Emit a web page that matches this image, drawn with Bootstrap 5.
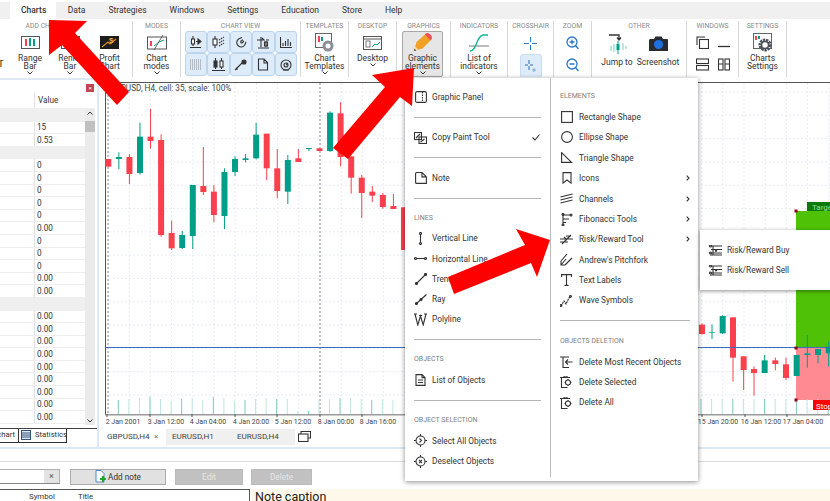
<!DOCTYPE html>
<html lang="en">
<head>
<meta charset="UTF-8" />
<title>Charts - Graphic elements</title>
<link href="https://cdn.jsdelivr.net/npm/bootstrap@5.3.3/dist/css/bootstrap.min.css" rel="stylesheet" />
<style>
  html, body { height: 100%; }
  body { width: 830px; height: 501px; overflow: hidden; background: #fff; color: #333; font-family: Roboto, "Liberation Sans", sans-serif; font-size: 8px; line-height: 1; }
  svg { display: block; flex: none; }
  .ic { fill: none; stroke: #333; stroke-width: 1.1; }

  .app { position: relative; width: 830px; height: 501px; padding-top: 2px; }

  /* top tabs */
  .top-tabs { height: 17px; background: #f0f0f0; flex-wrap: nowrap; }
  .top-tabs .nav-link { height: 17px; padding: 4px 11.5px 0; color: #333; font-size: 8.5px; border-radius: 0; }
  .top-tabs .nav-link.active { background: #fff; font-weight: 500; padding: 4px 10px 0 11px; }

  /* ribbon */
  .ribbon { height: 59px; flex: none; overflow: hidden; }
  .rgroup { height: 56px; margin-top: 2px; border-right: 1px solid #d8d8d8; flex: none; overflow: hidden; }
  .rtitle { height: 11px; padding-top: 2px; font-size: 6.8px; color: #8a8a8a; text-align: center; white-space: nowrap; }
  .ritem { display: flex; flex-direction: column; align-items: center; flex: none; text-align: center; font-size: 8.5px; line-height: 8.2px; color: #333; }
  .ricon { height: 21px; display: flex; align-items: center; justify-content: center; margin-bottom: 1px; }
  .chev { width: 6px; height: 4px; margin-top: 1px; }
  .viewgrid { display: grid; grid-template-columns: repeat(5, 22.4px); grid-auto-rows: 22.4px; margin: -1px 0 0 4px; }
  .vbtn { background: #deebf8; border: 1px solid #bcd4ec; border-radius: 3px; display: flex; align-items: center; justify-content: center; }
  .gfx-active { background: #e6e6e6; border: 1px solid #a8a8a8; border-radius: 2px; margin: -1px 0 0 5px; width: 41px; height: 46px; }
  .cross-active { background: #deebf8; border: 1px solid #c9ddf1; border-radius: 3px; width: 22px; height: 24px; display: flex; align-items: center; justify-content: center; }

  /* main */
  .mainrow { height: 369px; flex: none; }
  .sidepanel { width: 99px; flex: none; border-right: 2px solid #dce8f4; border-top: 2px solid #dfe9f3; padding-top: 2px; position: relative; }
  .close-x { width: 8px; height: 8px; background: #c4434f; color: #fff; font-size: 6px; line-height: 8px; text-align: center; margin: 2px 3px 0 auto; }
  .grid-head { height: 16px; margin-top: 1px; width: 95px; border-bottom: 1px solid #eee; }
  .cell-a { width: 35px; border-right: 1px solid #e2e2e2; height: 100%; flex: none; }
  .cell-b { padding-left: 2px; font-size: 8.2px; color: #333; }
  .grid-body { width: 85px; }
  .prow { height: 12.6px; border-bottom: 1px solid #eee; }
  .prow.grp { background: #efefef; border-bottom: 0; }
  .vscroll { position: absolute; left: 85px; top: 29px; width: 10px; height: 316px; background: #ebebeb; }
  .vscroll i { display: block; position: absolute; left: 0; top: 12px; width: 10px; height: 11px; background: #c0c0c0; }
  .vscroll b { display: block; position: absolute; left: 2px; font-weight: 400; }
  .ptabs { height: 14px; margin-top: 4px; border-top: 1px solid #444; }
  .ptab { height: 14px; padding: 0 3px 0 0; font-size: 7.7px; border-right: 1px solid #333; border-bottom: 1px solid #333; background: #fff; }
  .charttabs { height: 17px; background: #fff; padding-left: 8px; font-size: 8.1px; color: #444; }
  .ctab-off { background: #f0f0f0; height: 16px; width: 129px; padding-left: 6px; }

  /* bottom */
  .bottom { height: 54px; flex: none; border-top: 2px solid #dce8f4; position: relative; }
  .hline { height: 1px; background: #ddd; margin-top: 12px; }
  .tool-row { height: 16px; margin-top: 7px; }
  .srch { width: 60px; height: 15px; border: 1px solid #b0b0b0; border-left: 0; border-bottom-color: #888; display: flex; justify-content: flex-end; }
  .srch span { width: 15px; background: #e3e3e3; text-align: center; font-size: 9px; line-height: 13px; color: #555; }
  .flat-btn { height: 15.5px; padding: 0; border-radius: 0; font-size: 8.2px; line-height: 1; display: flex; align-items: center; justify-content: center; gap: 2px; }
  .btn-add { width: 96px; margin-left: 10px; background: #e1e1e1; border: 1px solid #ababab; color: #333; }
  .btn-off { background: #c1c1c1; border: 1px solid #bbb; color: #e6e6e6; }
  .notes-row { margin-top: 4px; height: 14px; }
  .notes-head { width: 250px; border-top: 1px solid #555; border-right: 1px solid #555; height: 14px; font-size: 7.8px; padding-top: 3px; flex: none; }
  .caption { flex: 1; margin-left: 2px; background: #fdf8e9; font-size: 12.5px; color: #222; padding: 2px 0 0 3px; white-space: nowrap; }

  /* graphic elements menu */
  .gmenu.dropdown-menu { display: flex; position: absolute; left: 405px; top: 78px; width: 293px; height: 403px; padding: 0; margin: 0; border: 0; border-radius: 0; box-shadow: 0 1px 5px rgba(0,0,0,.45); z-index: 5; font-size: 8px; }
  .mcol { width: 146px; flex: none; }
  .mcol-l { padding: 9px 9px 0; --rh: 20.22px; border-right: 1px solid #bdbdbd; height: 399px; }
  .mcol-r { padding: 8.5px 8px 0 9px; --rh: 20.4px; flex: 1; }
  .mrow { height: var(--rh); padding: 0; display: flex; align-items: center; gap: 5px; color: #333; background: none; white-space: nowrap; font-size: 8.3px; }
  .mcol-r .mrow { gap: 6px; }
  .mrow .ic-slot { width: 13px; display: flex; justify-content: center; flex: none; }
  .mrow .sub { margin-left: auto; }
  .mhead { height: var(--rh); padding: 0; display: flex; align-items: center; font-size: 7px; color: #808080; }
  .mdiv { height: var(--rh); display: flex; align-items: center; }
  .mdiv hr { width: 100%; margin: 0; border: 0; border-top: 1px solid #b5b5b5; opacity: 1; }
  .submenu.dropdown-menu { display: block; position: absolute; left: 700px; top: 230px; width: 118px; height: 60px; padding: 10px 0 0 9px; margin: 0; border: 0; border-radius: 0; box-shadow: 0 1px 4px rgba(0,0,0,.45); z-index: 6; --rh: 20.4px; }
  .overlay { position: absolute; left: 0; top: 0; z-index: 10; pointer-events: none; }
</style>
</head>
<body>
<div class="app d-flex flex-column">

  <!-- tabs -->
  <ul class="nav top-tabs">
    <li class="nav-item" style="margin-left:10px"><a class="nav-link active" href="#">Charts</a></li>
    <li class="nav-item"><a class="nav-link" href="#">Data</a></li>
    <li class="nav-item"><a class="nav-link" href="#">Strategies</a></li>
    <li class="nav-item"><a class="nav-link" href="#">Windows</a></li>
    <li class="nav-item"><a class="nav-link" href="#">Settings</a></li>
    <li class="nav-item"><a class="nav-link" href="#">Education</a></li>
    <li class="nav-item"><a class="nav-link" href="#">Store</a></li>
    <li class="nav-item"><a class="nav-link" href="#">Help</a></li>
  </ul>

  <!-- ribbon -->
  <div class="ribbon d-flex">
    <div class="rgroup" style="width:133px">
      <div class="rtitle" style="padding-right:44px">ADD CHART</div>
      <div class="d-flex">
        <div class="ritem" style="width:10px;padding-top:28px"><b style="margin-left:-8px;color:#7a5a20">T</b></div>
        <div class="ritem" style="width:40px">
          <div class="ricon"><svg width="19" height="13" viewBox="0 0 19 13"><rect x=".5" y=".5" width="18" height="12" fill="#fff" stroke="#555"/><path d="M5 3v7" stroke="#f9404c" stroke-width="2"/><path d="M9 2v8M13 3v7" stroke="#009e88" stroke-width="2"/></svg></div>
          Range<br>Bar
          <svg class="chev" viewBox="0 0 6 4"><path d="M.5.5 3 3 5.500.5" fill="none" stroke="#333"/></svg>
        </div>
        <div class="ritem" style="width:40px">
          <div class="ricon"><svg width="19" height="13" viewBox="0 0 19 13"><rect x=".5" y=".5" width="18" height="12" fill="#fff" stroke="#555"/><path d="M6 3v7" stroke="#333" stroke-width="2"/></svg></div>
          Renko<br>Bar
          <svg class="chev" viewBox="0 0 6 4"><path d="M.5.5 3 3 5.500.5" fill="none" stroke="#333"/></svg>
        </div>
        <div class="ritem" style="width:39px">
          <div class="ricon"><svg width="19" height="13" viewBox="0 0 19 13"><rect width="19" height="13" fill="#1d1d1d"/><path d="M2 11 8 6l2 2 6-5" fill="none" stroke="#e08a1e" stroke-width="1.200"/><text x="9" y="7" font-size="8" font-weight="700" fill="#f3a83a" font-family="Liberation Sans">$</text></svg></div>
          Profit<br>Chart
        </div>
      </div>
    </div>

    <div class="rgroup" style="width:48px">
      <div class="rtitle">MODES</div>
      <div class="ritem">
        <div class="ricon"><svg width="20" height="17" viewBox="0 0 20 17"><rect x=".5" y="3" width="19" height="12" fill="#fff" stroke="#555"/><path d="M4 7v5" stroke="#f9404c" stroke-width="2"/><path d="M7 12l5-4 5-2" fill="none" stroke="#0aa06e"/><path d="M7 16 16 1" stroke="#444" stroke-width=".8"/></svg></div>
        Chart<br>modes
        <svg class="chev" viewBox="0 0 6 4"><path d="M.5.5 3 3 5.500.5" fill="none" stroke="#333"/></svg>
      </div>
    </div>

    <div class="rgroup" style="width:120px">
      <div class="rtitle">CHART VIEW</div>
      <div class="viewgrid">
        <div class="vbtn"><svg class="ic" width="12" height="12" viewBox="0 0 12 12"><path d="M3 0v10M0 11.500h11"/><rect x="1.500" y="3" width="3" height="5" fill="#fff"/><path d="M6 5.500h2M8 3l3 2.500L8 8z" fill="#333"/></svg></div>
        <div class="vbtn"><svg class="ic" width="13" height="12" viewBox="0 0 13 12"><path d="M3 0v12"/><rect x="1" y="3" width="4" height="6" fill="#fff"/><path d="M7 4l5-3M7 7l5-3M7 10l5-3" stroke-dasharray="1.500 .8"/></svg></div>
        <div class="vbtn"><svg class="ic" width="12" height="12" viewBox="0 0 12 12" stroke-width="1.800"><path d="M7 1.500 3.500 3C.8 5.200 1.500 8.500 3.500 10s5 1.500 6.500-1.500L11 6"/><path d="M8 3.800 6 5C5 6.200 6.500 7.500 7.500 6.500L9 5"/></svg></div>
        <div class="vbtn"><svg class="ic" width="13" height="13" viewBox="0 0 13 13"><path d="M4 1v10M1 12h11M9 5v6"/><rect x="7.500" y="6" width="3" height="4"/><path d="M0 4h7l-2-2M12 4H9"/></svg></div>
        <div class="vbtn"><svg class="ic" width="12" height="11" viewBox="0 0 12 11"><path d="M.5 0v10.500H12M3 9V6M5.500 9V4M8 9V2M10.500 9V5"/></svg></div>
        <div class="vbtn"><svg width="12" height="11" viewBox="0 0 12 11"><path d="M0 1h12M0 3h12M0 5h12M0 7h12M0 9h12M0 11h12" stroke="#666" stroke-width=".7" stroke-dasharray="1 1"/></svg></div>
        <div class="vbtn"><svg class="ic" width="13" height="13" viewBox="0 0 13 13"><path d="M3.500 0v11M9.500 0v11M0 12.500h13"/><rect x="2" y="3" width="3" height="6" fill="#333"/><rect x="8" y="3" width="3" height="6" fill="#fff"/></svg></div>
        <div class="vbtn"><svg class="ic" width="13" height="12" viewBox="0 0 13 12"><path d="M1 11 8 4M3 11V8"/><circle cx="10" cy="3" r="2" fill="#333"/></svg></div>
        <div class="vbtn"><svg class="ic" width="12" height="13" viewBox="0 0 12 13" stroke-width="1.300"><path d="M1.500 1h5.500l3.500 3.500v7.500h-9zM7 1v4h3.500"/></svg></div>
        <div class="vbtn"><svg class="ic" width="12" height="12" viewBox="0 0 12 12" stroke-width="1.200"><circle cx="6" cy="6" r="5"/><circle cx="6" cy="6" r="2"/><path d="M6 6l2-2M3 11h6"/></svg></div>
      </div>
    </div>

    <div class="rgroup" style="width:48px">
      <div class="rtitle">TEMPLATES</div>
      <div class="ritem">
        <div class="ricon"><svg width="19" height="19" viewBox="0 0 19 19"><rect x=".5" y=".5" width="16" height="14" fill="#fff" stroke="#666"/><path d="M4 3v6" stroke="#f9404c" stroke-width="2"/><path d="M7 4v4" stroke="#009e88" stroke-width="2"/><circle cx="13" cy="13" r="5.500" fill="#8a8f95"/><circle cx="13" cy="13" r="2.500" fill="#fff"/></svg></div>
        Chart<br>Templates
        <svg class="chev" viewBox="0 0 6 4"><path d="M.5.5 3 3 5.500.5" fill="none" stroke="#333"/></svg>
      </div>
    </div>

    <div class="rgroup" style="width:48px">
      <div class="rtitle">DESKTOP</div>
      <div class="ritem">
        <div class="ricon"><svg width="19" height="14" viewBox="0 0 19 14"><rect x=".5" y=".5" width="18" height="13" fill="#fff" stroke="#555"/><path d="M.5 3h18" stroke="#555"/><rect x="3" y="5" width="4" height="6" fill="#fff" stroke="#555" stroke-width=".8"/><path d="M9 11l3-3 2 1 3-3" fill="none" stroke="#0aa06e"/></svg></div>
        Desktop
        <svg class="chev" viewBox="0 0 6 4"><path d="M.5.5 3 3 5.500.5" fill="none" stroke="#333"/></svg>
      </div>
    </div>

    <div class="rgroup" style="width:54px">
      <div class="rtitle">GRAPHICS</div>
      <div class="ritem gfx-active">
        <div class="ricon"><svg width="21" height="21" viewBox="0 0 21 21"><path d="M2 19 4.500 10 14 1.500 20 7l-9.500 9.500z" fill="#f0a126"/><path d="M13 2.500c1-1.500 2.500-2 4-1s3 2.500 3 4-1 2-2 2.500z" fill="#f0505a"/><path d="M2 19l1.200-4.500 3.300 3.200z" fill="#f6d7a8"/><path d="M2 19l.6-2.200 1.500 1.600z" fill="#333"/></svg></div>
        Graphic<br>elements
        <svg class="chev" viewBox="0 0 6 4"><path d="M.5.5 3 3 5.500.5" fill="none" stroke="#333"/></svg>
      </div>
    </div>

    <div class="rgroup" style="width:57px">
      <div class="rtitle">INDICATORS</div>
      <div class="ritem">
        <div class="ricon"><svg width="20" height="20" viewBox="0 0 20 20"><path d="M0 13h20" stroke="#555" stroke-width=".8"/><path d="M1 18c7 0 6-15 13-16h5" fill="none" stroke="#10b596" stroke-width="1.300"/></svg></div>
        List of<br>indicators
        <svg class="chev" viewBox="0 0 6 4"><path d="M.5.5 3 3 5.500.5" fill="none" stroke="#333"/></svg>
      </div>
    </div>

    <div class="rgroup" style="width:46px">
      <div class="rtitle">CROSSHAIR</div>
      <div class="d-flex flex-column align-items-center">
        <div class="ricon" style="height:22px;margin:0"><svg width="13" height="13" viewBox="0 0 13 13"><path d="M6.500 0v5M6.500 8v5M0 6.500h5M8 6.500h5" stroke="#2a7fd0"/></svg></div>
        <div class="cross-active"><svg width="13" height="13" viewBox="0 0 13 13"><path d="M5 0v4M5 6v4M1 5h3M6 5h3" stroke="#2a6fb0"/><path d="M10 8v4M8 10h4" stroke="#6a9cc8" stroke-width=".8"/></svg></div>
      </div>
    </div>

    <div class="rgroup" style="width:38px">
      <div class="rtitle">ZOOM</div>
      <div class="d-flex flex-column align-items-center" style="gap:8px;padding-top:4px">
        <svg width="13" height="14" viewBox="0 0 13 14" fill="none" stroke="#2a78c8" stroke-width="1.300"><circle cx="6" cy="6" r="5"/><path d="M9.500 9.500 12.500 13M3.500 6h5M6 3.500v5"/></svg>
        <svg width="13" height="14" viewBox="0 0 13 14" fill="none" stroke="#2a78c8" stroke-width="1.300"><circle cx="6" cy="6" r="5"/><path d="M9.500 9.500 12.500 13M3.500 6h5"/></svg>
      </div>
    </div>

    <div class="rgroup" style="width:95px">
      <div class="rtitle">OTHER</div>
      <div class="d-flex">
        <div class="ritem" style="width:36px;margin-left:7px">
          <div class="ricon" style="height:24px;margin-bottom:2px"><svg width="19" height="22" viewBox="0 0 19 22"><path d="M1 2h10v4M9 4.500l2 2.500 2-2.500" fill="none" stroke="#333" stroke-width="1.300"/><path d="M3 13v5M6 11v8M15 10v7M18 13v3" stroke="#7fd0b8" stroke-width="1"/><path d="M10 8v13" stroke="#009e88"/><rect x="8.500" y="11" width="3" height="6" fill="#009e88"/></svg></div>
          Jump to
        </div>
        <div class="ritem" style="width:42px;margin-left:2px">
          <div class="ricon" style="height:24px;margin-bottom:2px"><svg width="19" height="16" viewBox="0 0 19 16"><path d="M1 3h4l1.500-2.500h6L14 3h4a1 1 0 0 1 1 1v11H0V4z" fill="#272b33"/><circle cx="9.500" cy="8.500" r="4.500" fill="#1e6fe0"/></svg></div>
          Screenshot
        </div>
      </div>
    </div>

    <div class="rgroup" style="width:52px">
      <div class="rtitle">WINDOWS</div>
      <div class="d-flex flex-wrap" style="padding:4px 0 0 9px;gap:9px 9px;width:52px">
        <svg class="ic" width="13" height="13" viewBox="0 0 13 13"><path d="M1 9V1h8"/><rect x="3.500" y="3.500" width="9" height="9"/></svg>
        <svg width="12" height="13" viewBox="0 0 12 13"><path d="M0 10.500h12" stroke="#333" stroke-width="1.300"/></svg>
        <svg class="ic" width="13" height="13" viewBox="0 0 13 13"><rect x=".5" y="1" width="12" height="4.500"/><rect x=".5" y="7.500" width="12" height="4.500"/></svg>
        <svg class="ic" width="12" height="13" viewBox="0 0 12 13"><rect x=".5" y="1" width="4.500" height="11"/><rect x="7" y="1" width="4.500" height="11"/><path d="M.5 6h4.500M7 6h4.500"/></svg>
      </div>
    </div>

    <div class="rgroup" style="width:48px">
      <div class="rtitle">SETTINGS</div>
      <div class="ritem">
        <div class="ricon"><svg width="20" height="20" viewBox="0 0 20 20"><rect x=".5" y=".5" width="18" height="15" fill="#fff" stroke="#666"/><path d="M3 3v4" stroke="#f9404c" stroke-width="2"/><path d="M6 3v3" stroke="#009e88" stroke-width="2"/><circle cx="12" cy="12" r="5" fill="none" stroke="#4a4f55" stroke-width="3" stroke-dasharray="2.200 .8"/><circle cx="12" cy="12" r="3.500" fill="none" stroke="#4a4f55" stroke-width="1.500"/></svg></div>
        Charts<br>Settings
      </div>
    </div>
  </div>

  <!-- main -->
  <div class="mainrow d-flex">
    <div class="sidepanel">
      <div class="close-x">×</div>
      <div class="grid-head d-flex align-items-center"><div class="cell-a"></div><div class="cell-b" style="margin-left:1px">Value</div></div>
      <div class="grid-body" id="rows"></div>
      <div class="vscroll">
        <b style="top:2px"><svg width="6" height="4" viewBox="0 0 6 4"><path d="M.5 3.500 3 1l2.500 2.500" fill="none" stroke="#333"/></svg></b>
        <i></i>
        <b style="top:310px"><svg width="6" height="4" viewBox="0 0 6 4"><path d="M.5.5 3 3l2.500-2.500" fill="none" stroke="#333"/></svg></b>
      </div>
      <div class="ptabs d-flex">
        <div class="ptab d-flex align-items-center" style="width:19px;justify-content:flex-end">chart</div>
        <div class="ptab d-flex align-items-center gap-1" style="width:48px;padding-left:2px">
          <svg width="10" height="10" viewBox="0 0 10 10"><rect x=".5" y=".5" width="9" height="9" fill="#dfe9f5" stroke="#33527a"/><path d="M1 3h8M1 5h8M1 7h8" stroke="#33527a"/></svg>Statistics
        </div>
      </div>
    </div>

    <div class="flex-grow-1 d-flex flex-column" style="min-width:0">
      <svg id="chart" width="731" height="350" viewBox="99 78 731 350" font-family="Roboto, Liberation Sans, sans-serif"></svg>
      <div class="charttabs d-flex align-items-center">
        <span style="width:47px">GBPUSD,H4</span><span style="width:12px;color:#777">×</span>
        <div class="ctab-off d-flex align-items-center"><span style="width:65px">EURUSD,H1</span><span>EURUSD,H4</span></div>
        <svg class="ic" style="margin-left:3px" width="13" height="11" viewBox="0 0 13 11" stroke="#444"><path d="M3 3V.5h9.500V7H10"/><rect x=".5" y="3" width="9.500" height="7.500"/></svg>
      </div>
    </div>
  </div>

  <!-- bottom panel -->
  <div class="bottom">
    <div class="hline"></div>
    <div class="tool-row d-flex">
      <div class="srch"><span>×</span></div>
      <button class="btn flat-btn btn-add" type="button">
        <svg width="11" height="13" viewBox="0 0 11 13"><path d="M1 .5h5l3 3V12H1z" fill="#fff" stroke="#4a8ac8"/><path d="M8 6v6M5 9h6" stroke="#22a822" stroke-width="2.200"/></svg>Add note
      </button>
      <button class="btn flat-btn btn-off" style="width:68px;margin-left:9px" type="button">Edit</button>
      <button class="btn flat-btn btn-off" style="width:61px;margin-left:8px" type="button">Delete</button>
    </div>
    <div class="notes-row d-flex">
      <div class="notes-head d-flex">
        <span style="margin-left:29px;width:49px">Symbol</span><span>Title</span>
      </div>
      <div class="caption">Note caption</div>
    </div>
  </div>

  <!-- graphic elements menu -->
  <div class="dropdown-menu show gmenu">
    <div class="mcol mcol-l">
      <a class="dropdown-item mrow" href="#"><span class="ic-slot"><svg class="ic" width="12" height="12" viewBox="0 0 12 12" stroke-width="1.200"><rect x=".6" y=".6" width="10.800" height="10.800" rx="1.500"/><path d="M7.500 1v10" stroke-dasharray="1.500 1"/></svg></span>Graphic Panel</a>
      <div class="mdiv"><hr></div>
      <a class="dropdown-item mrow" href="#"><span class="ic-slot"><svg class="ic" width="13" height="12" viewBox="0 0 13 12" stroke-width=".9"><rect x=".5" y=".5" width="7" height="7"/><rect x="5" y="5" width="7.500" height="6.500"/><path d="M2 6l4-4M6.500 10l4-3"/></svg></span>Copy Paint Tool<svg class="sub" style="margin-right:1px" width="8" height="7" viewBox="0 0 8 7"><path d="M.5 3.500 3 6 7.500.5" fill="none" stroke="#333" stroke-width="1.100"/></svg></a>
      <div class="mdiv"><hr></div>
      <a class="dropdown-item mrow" href="#"><span class="ic-slot"><svg class="ic" width="12" height="12" viewBox="0 0 12 12" stroke-width="1.200"><path d="M.6 1.500a1 1 0 0 1 1-1H7l4.400 4.400v6.500H1.600a1 1 0 0 1-1-1zM7 .5v4.400h4.400"/></svg></span>Note</a>
      <div class="mdiv"><hr></div>
      <div class="mhead">LINES</div>
      <a class="dropdown-item mrow" href="#"><span class="ic-slot"><svg class="ic" width="5" height="13" viewBox="0 0 5 13"><path d="M2.500 2v9"/><circle cx="2.500" cy="1.500" r="1"/><circle cx="2.500" cy="11.500" r="1"/></svg></span>Vertical Line</a>
      <a class="dropdown-item mrow" href="#"><span class="ic-slot"><svg class="ic" width="13" height="5" viewBox="0 0 13 5"><path d="M2 2.500h9"/><circle cx="1.500" cy="2.500" r="1"/><circle cx="11.500" cy="2.500" r="1"/></svg></span>Horizontal Line</a>
      <a class="dropdown-item mrow" href="#"><span class="ic-slot"><svg class="ic" width="12" height="12" viewBox="0 0 12 12"><path d="M1.500 10.500l9-9"/><circle cx="1.500" cy="10.500" r="1" fill="#333"/><circle cx="10.500" cy="1.500" r="1" fill="#333"/></svg></span>Trend Line</a>
      <a class="dropdown-item mrow" href="#"><span class="ic-slot"><svg class="ic" width="12" height="12" viewBox="0 0 12 12"><path d="M1.500 10.500l10-9"/><circle cx="1.500" cy="10.500" r="1" fill="#333"/><circle cx="6" cy="6.500" r="1" fill="#333"/></svg></span>Ray</a>
      <a class="dropdown-item mrow" href="#"><span class="ic-slot"><svg class="ic" width="13" height="13" viewBox="0 0 13 13"><path d="M1 1l2.800 11L6.500 3l2.700 9L12 1M0 1h3M5 2.500h3M10 1h3"/></svg></span>Polyline</a>
      <div class="mdiv"><hr></div>
      <div class="mhead">OBJECTS</div>
      <a class="dropdown-item mrow" href="#"><span class="ic-slot"><svg class="ic" width="11" height="12" viewBox="0 0 11 12" stroke-width="1.200"><path d="M1 .6h6l3 3v7.800H1zM7 .6v3h3M3 6h5M3 8.500h5"/></svg></span>List of Objects</a>
      <div class="mdiv"><hr></div>
      <div class="mhead">OBJECT SELECTION</div>
      <a class="dropdown-item mrow" href="#"><span class="ic-slot"><svg class="ic" width="13" height="13" viewBox="0 0 13 13" stroke-width="1.200"><circle cx="6.500" cy="6.500" r="4.500"/><path d="M6.500 0v2M6.500 11v2M0 6.500h2M11 6.500h2M5.500 4.500l2 2-2 2"/></svg></span>Select All Objects</a>
      <a class="dropdown-item mrow" href="#"><span class="ic-slot"><svg class="ic" width="13" height="13" viewBox="0 0 13 13" stroke-width="1.200"><circle cx="6.500" cy="6.500" r="4.500"/><path d="M6.500 0v2M6.500 11v2M0 6.500h2M11 6.500h2M5 5l3 3M8 5l-3 3"/></svg></span>Deselect Objects</a>
    </div>

    <div class="mcol mcol-r">
      <div class="mhead">ELEMENTS</div>
      <a class="dropdown-item mrow" href="#"><span class="ic-slot"><svg class="ic" width="12" height="12" viewBox="0 0 12 12" stroke-width="1.200"><rect x=".6" y=".6" width="10.800" height="10.800"/></svg></span>Rectangle Shape</a>
      <a class="dropdown-item mrow" href="#"><span class="ic-slot"><svg class="ic" width="12" height="12" viewBox="0 0 12 12" stroke-width="1.200"><circle cx="6" cy="6" r="5.400"/></svg></span>Ellipse Shape</a>
      <a class="dropdown-item mrow" href="#"><span class="ic-slot"><svg class="ic" width="12" height="11" viewBox="0 0 12 11" stroke-width="1.200"><path d="M.6.600v9.800h10z"/></svg></span>Triangle Shape</a>
      <a class="dropdown-item mrow" href="#"><span class="ic-slot"><svg class="ic" width="10" height="12" viewBox="0 0 10 12" stroke-width="1.200"><path d="M1 .6h8v10.500L5 8l-4 3.100z"/></svg></span>Icons<svg class="sub" width="4" height="6" viewBox="0 0 4 6"><path d="M.7.700 3 3 .7 5.300" fill="none" stroke="#333" stroke-width="1.100"/></svg></a>
      <a class="dropdown-item mrow" href="#"><span class="ic-slot"><svg class="ic" width="13" height="11" viewBox="0 0 13 11"><path d="M.5 4l12-3M.5 7l12-3M.5 10l12-3"/></svg></span>Channels<svg class="sub" width="4" height="6" viewBox="0 0 4 6"><path d="M.7.700 3 3 .7 5.300" fill="none" stroke="#333" stroke-width="1.100"/></svg></a>
      <a class="dropdown-item mrow" href="#"><span class="ic-slot"><svg class="ic" width="12" height="13" viewBox="0 0 12 13"><path d="M2 1v11M2 2h8M2 6h6M2 9.500h3"/><circle cx="2" cy="1.500" r="1"/><circle cx="10" cy="2" r="1"/><circle cx="2" cy="12" r="1"/></svg></span>Fibonacci Tools<svg class="sub" width="4" height="6" viewBox="0 0 4 6"><path d="M.7.700 3 3 .7 5.300" fill="none" stroke="#333" stroke-width="1.100"/></svg></a>
      <a class="dropdown-item mrow" href="#"><span class="ic-slot"><svg class="ic" width="13" height="11" viewBox="0 0 13 11" stroke-width=".9"><path d="M0 5h13M0 8h8M2 10l9-9M6 2h5M4 3l3 3"/></svg></span>Risk/Reward Tool<svg class="sub" width="4" height="6" viewBox="0 0 4 6"><path d="M.7.700 3 3 .7 5.300" fill="none" stroke="#333" stroke-width="1.100"/></svg></a>
      <a class="dropdown-item mrow" href="#"><span class="ic-slot"><svg class="ic" width="13" height="13" viewBox="0 0 13 13"><path d="M1 12l5-6M1 8l6-7M5 12l7-7M1 8v4h4"/></svg></span>Andrew's Pitchfork</a>
      <a class="dropdown-item mrow" href="#"><span class="ic-slot"><svg class="ic" width="11" height="12" viewBox="0 0 11 12"><path d="M.6 3V.6h9.800V3M5.500.6v10.800M3.500 11.400h4"/></svg></span>Text Labels</a>
      <a class="dropdown-item mrow" href="#"><span class="ic-slot"><svg class="ic" width="13" height="12" viewBox="0 0 13 12"><path d="M1 11 4 6l2 3 4-8" stroke-dasharray="2 .6"/><circle cx="1" cy="10.500" r=".9"/><circle cx="10.500" cy="1.500" r=".9"/></svg></span>Wave Symbols</a>
      <div class="mdiv"><hr></div>
      <div class="mhead">OBJECTS DELETION</div>
      <a class="dropdown-item mrow" href="#"><span class="ic-slot"><svg class="ic" width="13" height="12" viewBox="0 0 13 12" stroke-width="1.100"><path d="M0 1h9M3 1v10.500h6M12.500 6H5.500M8 3.500 5.500 6 8 8.500"/></svg></span>Delete Most Recent Objects</a>
      <a class="dropdown-item mrow" href="#"><span class="ic-slot"><svg class="ic" width="13" height="12" viewBox="0 0 13 12" stroke-width="1.100"><path d="M0 1.500h10M4 1.500V0h3v1.500M1.500 1.500v10h6"/><circle cx="8" cy="6.500" r="2.500"/><path d="M8 3v1M8 9v1M4.500 6.500h1M10.500 6.500h1"/></svg></span>Delete Selected</a>
      <a class="dropdown-item mrow" href="#"><span class="ic-slot"><svg class="ic" width="13" height="12" viewBox="0 0 13 12" stroke-width="1.100"><path d="M0 1.500h10M4 1.500V0h3v1.500M1.500 1.500v10h6"/><circle cx="8" cy="6.500" r="2.500"/><path d="M8 3v1M8 9v1M4.500 6.500h1M10.500 6.500h1"/></svg></span>Delete All</a>
    </div>
  </div>

  <div class="dropdown-menu show submenu">
    <a class="dropdown-item mrow" href="#"><span class="ic-slot"><svg class="ic" width="13" height="11" viewBox="0 0 13 11" stroke-width=".9"><path d="M2 1h11M2 4.500h11M2 8h11M4 1v9M1 10h12"/><circle cx="1.500" cy="1" r="1"/><circle cx="1.500" cy="8" r="1"/><path d="M7 7V5M6 6l1-1 1 1"/></svg></span>Risk/Reward Buy</a>
    <a class="dropdown-item mrow" href="#"><span class="ic-slot"><svg class="ic" width="13" height="11" viewBox="0 0 13 11" stroke-width=".9"><path d="M2 1h11M2 4.500h11M2 8h11M4 1v9M1 10h12"/><circle cx="1.500" cy="1" r="1"/><circle cx="1.500" cy="8" r="1"/><path d="M7 4V6M6 5l1 1 1-1"/></svg></span>Risk/Reward Sell</a>
  </div>

  <!-- red arrows on top of the screenshot -->
  <svg class="overlay" width="830" height="501" viewBox="0 0 830 501">
    <g fill="#f00">
      <polygon points="49,20 87,21 75,33 129,92 117,105 62,45 49,55" />
      <polygon points="414,68 372,75 385,87 333,148 348,159 400,97 412,106" />
      <polygon points="550,240 516,229 525,245 448,277 454,294 531,263 537,277" />
    </g>
  </svg>
</div>

<script src="https://cdn.jsdelivr.net/npm/bootstrap@5.3.3/dist/js/bootstrap.bundle.min.js"></script>
<script>
// left panel values, "" is a grey group row
const vals = ["", "15", "0.53", "", "0", "0", "0", "0", "0", "0.00", "0", "0", "0", "0.00", "0.00", "",
  "0.00", "0.00", "0.00", "0.00", "0.00", "0.00", "0.00", "0.00", "0.00"];
document.getElementById("rows").innerHTML = vals.map(v =>
  v === "" ? '<div class="prow grp"></div>'
           : '<div class="prow d-flex align-items-center"><div class="cell-a"></div><div class="cell-b">' + v + '</div></div>'
).join("");

// candles measured in page pixels: body top, body bottom, wick top, wick bottom, colour
const R = "#f9404c", G = "#009e88";
const y = z => 80 + z / 3;
const first = [[237,260,237,260,R],[231,237,217,268,G],[231,282,222,312,R],[170,279,128,284,G],[170,183,87,206,R],
  [180,465,163,470,R],[459,505,422,510,R],[465,504,453,507,G],[315,468,315,507,G],[318,336,201,345,R],
  [335,405,315,427,R],[276,408,265,447,G],[237,276,229,288,G],[235,240,222,247,G],[164,235,128,238,G],
  [161,265,161,300,R],[265,333,207,355,R],[240,335,225,372,G],[235,246,207,246,R],[204,207,204,213,G],
  [205,213,205,213,R],[98,213,94,216,G],[100,231,66,259,R],[229,293,229,341,R],[293,339,285,414,R],
  [335,347,318,366,R],[345,381,339,386,R],[378,387,342,387,R],[382,510,382,510,R]];
const second = [[36,404,432,400,434,R],[66,427,429,403,447,G],[98,378,430,376,432,G],[129,382,503,382,575,R],
  [161,499,540,499,600,R],[192,537,549,529,617,R],[224,511,549,495,549,G],[256,511,522,503,541,R],
  [288,523,564,503,570,R],[320,495,558,495,558,G],[352,490,495,435,533,G],[384,477,495,477,520,G],[416,470,490,455,530,G]];

let s = "";
const line = (x1, y1, x2, y2, c, w, d) => `<line x1="${x1}" y1="${y1}" x2="${x2}" y2="${y2}" stroke="${c}" stroke-width="${w}"${d ? ` stroke-dasharray="${d}"` : ""}/>`;
const rect = (x, y, w, h, c) => `<rect x="${x}" y="${y}" width="${w}" height="${h}" fill="${c}"/>`;

// grid
for (let gy = 92; gy < 414; gy += 23.3) s += line(105, gy, 830, gy, "#dfe9f0", 0.8, "2 2");
for (let gx = 108; gx < 830; gx += 21.2) s += line(gx, 83, gx, 414, "#dfe9f0", 0.8, "2 2");

// risk/reward zone
s += rect(796, 211, 34, 137, "#4fc107") + rect(796, 348, 34, 52, "#ff8a92");

// frame, separators
s += line(108, 83, 108, 414, "#777", 0.8, "2 2") + line(320, 83, 320, 414, "#777", 0.8, "2 2");
s += line(105, 82.500, 830, 82.500, "#555", 1) + line(105.500, 82, 105.500, 415, "#555", 1);

// volumes
const vh = [14,15,16,17,15,13,15,16,14,17,16,13,14,15,16,15,15,3,3,14,15,16,16,15,14,15,14];
vh.forEach((h, i) => { const vx = 118.300 + i * 10.56; s += line(vx, 414 - h, vx, 414, i % 3 ? "#bfe6df" : "#7ccabd", 1); });
for (let i = 0; i < 13; i++) { const vx = 701 + i * 10.6; s += line(vx, 399, vx, 414, i % 3 ? "#bfe6df" : "#7ccabd", 1); }

// candles
first.forEach((c, i) => {
  const cx = 108.300 + i * 10.56;
  s += line(cx, y(c[2]), cx, y(c[3]), c[4], 1);
  s += rect(cx - 3, y(c[0]), 6, y(c[1]) - y(c[0]), c[4]);
});
second.forEach(c => {
  const cx = 690 + c[0] / 3, yy = z => 190 + z / 3;
  s += line(cx, yy(c[3]), cx, yy(c[4]), c[5], 1);
  s += rect(cx - 3, yy(c[1]), 6, yy(c[2]) - yy(c[1]), c[5]);
});

// blue level and zone markers
s += line(105, 347.500, 830, 347.500, "#3b6cc4", 1);
s += rect(807, 202, 23, 9, "#0a7a0a") + rect(813, 400, 17, 10, "#f00");
s += `<text x="812" y="209.500" font-size="8" fill="#9fe08f">Target</text><text x="816" y="408.500" font-size="8" fill="#fff">Stop</text>`;
[211, 348, 400].forEach(my => { s += rect(794.500, my - 1.500, 3, 3, "#8a0010"); });

// axis
s += rect(105, 414, 725, 1.500, "#9a9a9a");
[["2 Jan 2001",123],["3 Jan 12:00",166],["4 Jan 04:00",208],["4 Jan 20:00",251],["5 Jan 12:00",293],["8 Jan 00:00",336],["8 Jan 16:00",378],
 ["15 Jan 20:00",718],["16 Jan 12:00",761],["17 Jan 04:00",803]].forEach(d => {
  s += `<text x="${d[1]}" y="424" font-size="7" fill="#444" text-anchor="middle">${d[0]}</text>`;
  s += line(d[1] - 16, 414, d[1] - 16, 417, "#555", 1);
});

s += `<text x="110" y="91" font-size="8.200" fill="#444">GBPUSD, H4, cell: 35, scale: 100%</text>`;
document.getElementById("chart").innerHTML = s;
</script>
</body>
</html>
